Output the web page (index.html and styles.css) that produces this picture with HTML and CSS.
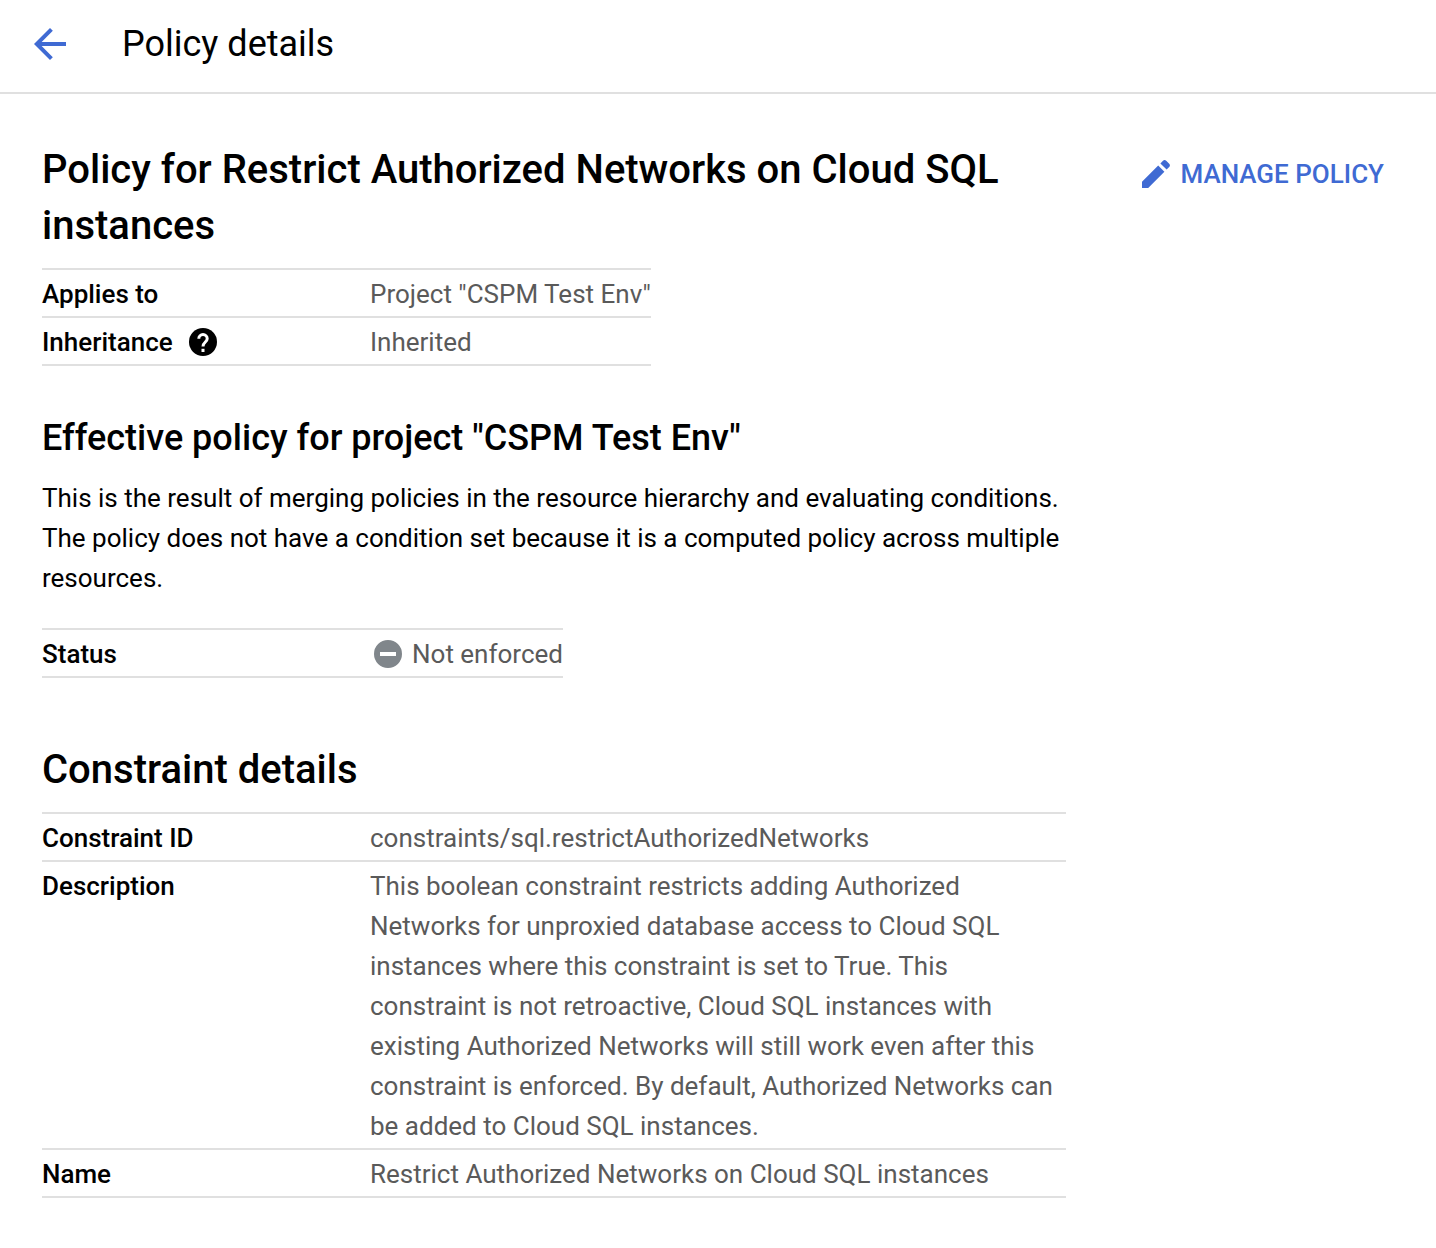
FILE: index.html
```html
<!DOCTYPE html>
<html lang="en">
<head>
<meta charset="utf-8">
<meta name="viewport" content="width=device-width, initial-scale=1">
<title>Policy details</title>
<link rel="stylesheet" href="styles.css">
</head>
<body>
<header class="topbar">
  <a class="back" href="#" aria-label="Back">
    <svg class="back-icon" viewBox="4 4 16 16" aria-hidden="true"><path d="M20 11H7.83l5.59-5.59L12 4l-8 8 8 8 1.41-1.41L7.83 13H20v-2z"/></svg>
  </a>
  <h1 class="topbar-title">Policy details</h1>
</header>
<main class="page">
  <div class="content">
    <section class="summary">
      <h2 class="title">Policy for Restrict Authorized Networks on Cloud SQL instances</h2>
      <table class="details">
        <tr><th scope="row">Applies to</th><td>Project "CSPM Test Env"</td></tr>
        <tr><th scope="row"><span class="with-icon">Inheritance
          <button class="help" type="button" aria-label="Help"><svg class="help-icon" viewBox="0 0 28 28" aria-hidden="true"><circle cx="14" cy="14" r="14"/><path class="help-mark" d="M9.8 10.8a4.2 4.2 0 1 1 8.4 0c0 3-4.2 3.6-4.2 7.6"/><path class="help-dot" d="M12.5 20.8h3v3.2h-3z"/></svg></button></span></th><td>Inherited</td></tr>
      </table>
    </section>
    <section class="effective">
      <h3 class="subtitle">Effective policy for project "CSPM Test Env"</h3>
      <p class="text">This is the result of merging policies in the resource hierarchy and evaluating conditions. The policy does not have a condition set because it is a computed policy across multiple resources.</p>
      <table class="details">
        <tr><th scope="row">Status</th><td><span class="status"><svg class="status-icon" viewBox="0 0 28 28" aria-hidden="true"><path fill-rule="evenodd" d="M14 0a14 14 0 1 0 0 28 14 14 0 0 0 0-28zM6 12h16v4H6z"/></svg>Not enforced</span></td></tr>
      </table>
    </section>
    <section class="constraint">
      <h2 class="title">Constraint details</h2>
      <table class="details details-wide">
        <tr><th scope="row">Constraint ID</th><td>constraints/sql.restrictAuthorizedNetworks</td></tr>
        <tr><th scope="row">Description</th><td>This boolean constraint restricts adding Authorized Networks for unproxied database access to Cloud SQL instances where this constraint is set to True. This constraint is not retroactive, Cloud SQL instances with existing Authorized Networks will still work even after this constraint is enforced. By default, Authorized Networks can be added to Cloud SQL instances.</td></tr>
        <tr><th scope="row">Name</th><td>Restrict Authorized Networks on Cloud SQL instances</td></tr>
      </table>
    </section>
  </div>
  <button class="manage" type="button">
    <svg class="manage-icon" viewBox="0 0 28 28" aria-hidden="true"><path d="M0 21.8 16.2 5.6l6.2 6.2L6.2 28H0zM18.4 3.4l2.6-2.6a2.4 2.4 0 0 1 3.2 0l3 3a2.4 2.4 0 0 1 0 3.2l-2.6 2.6z"/></svg>
    MANAGE POLICY
  </button>
</main>
</body>
</html>
```
FILE: styles.css
```css
* {
  box-sizing: border-box;
}

body {
  margin: 0;
  background: #fff;
  color: #000;
  font-family: Roboto, "Liberation Sans", sans-serif;
  font-size: 26px;
  line-height: 40px;
}

h1,
h2,
h3,
p {
  margin: 0;
}

svg {
  display: block;
  flex: none;
  fill: currentColor;
}

button {
  margin: 0;
  padding: 0;
  border: 0;
  background: none;
  color: inherit;
  font: inherit;
  cursor: pointer;
}

.topbar {
  display: flex;
  align-items: center;
  gap: 56px;
  padding: 20px 34px 24px;
  border-bottom: 2px solid #e0e0e0;
}

.back {
  color: #3f6ad3;
}

.back-icon {
  width: 32px;
  height: 32px;
}

.topbar-title {
  font-size: 36px;
  font-weight: 400;
  line-height: 48px;
}

.page {
  display: flex;
  align-items: flex-start;
  justify-content: space-between;
  gap: 24px;
  padding: 48px 52px 50px 42px;
}

.content {
  flex: 0 1 1024px;
  display: flex;
  flex-direction: column;
}

.title {
  margin-bottom: 14px;
  font-size: 40px;
  font-weight: 500;
  line-height: 56px;
}

.subtitle {
  margin-bottom: 16px;
  font-size: 36px;
  font-weight: 500;
  line-height: 48px;
}

.effective {
  margin-top: 48px;
}

.constraint {
  margin-top: 64px;
}

.text {
  margin-bottom: 30px;
}

.details {
  border-collapse: collapse;
}

.details-wide {
  width: 100%;
}

.details tr {
  border-top: 2px solid #e0e0e0;
  border-bottom: 2px solid #e0e0e0;
}

.details th {
  width: 328px;
  min-width: 328px;
  padding: 4px 0 2px;
  font-weight: 500;
  text-align: left;
  vertical-align: top;
}

.details td {
  padding: 4px 0 2px;
  color: #5a5a5a;
  vertical-align: top;
}

.with-icon {
  display: flex;
  align-items: center;
  gap: 16px;
}

.help-icon,
.status-icon,
.manage-icon {
  width: 28px;
  height: 28px;
}

.help-mark {
  fill: none;
  stroke: #fff;
  stroke-width: 3;
}

.help-dot {
  fill: #fff;
}

.status {
  display: flex;
  align-items: center;
  gap: 10px;
  padding-left: 4px;
}

.status-icon {
  color: #80868b;
}

.manage {
  display: flex;
  flex: none;
  align-items: center;
  gap: 10px;
  margin-top: 12px;
  color: #3f6ad3;
  font-weight: 500;
}
```
